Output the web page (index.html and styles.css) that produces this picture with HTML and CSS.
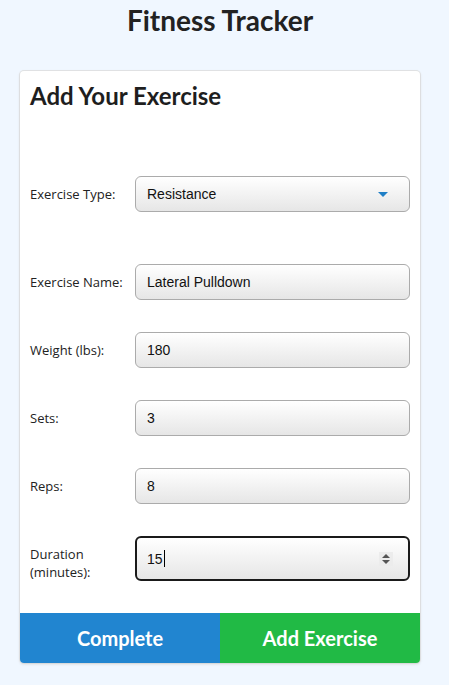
FILE: index.html
```html
<!DOCTYPE html>
<html lang="en">
<head>
<meta charset="utf-8">
<title>Fitness Tracker</title>
<link rel="stylesheet" href="styles.css">
</head>
<body>
<div class="page">
<h1 class="title">Fitness Tracker</h1>
<div class="card">
  <div class="card-body">
    <h2 class="card-title">Add Your Exercise</h2>
    <div class="row type-row">
      <label class="label">Exercise Type:</label>
      <div class="control select">
        <span>Resistance</span>
        <svg class="arrow" width="10" height="5" viewBox="0 0 10 5"><path d="M0 0H10L5 5Z" fill="#1f7fc6"/></svg>
      </div>
    </div>
    <div class="fields">
      <div class="row">
        <label class="label">Exercise Name:</label>
        <div class="control">Lateral Pulldown</div>
      </div>
      <div class="row">
        <label class="label">Weight (lbs):</label>
        <div class="control">180</div>
      </div>
      <div class="row">
        <label class="label">Sets:</label>
        <div class="control">3</div>
      </div>
      <div class="row">
        <label class="label">Reps:</label>
        <div class="control">8</div>
      </div>
      <div class="row">
        <label class="label label-two">Duration<br>(minutes):</label>
        <div class="control focused">
          <span class="value">15<span class="caret"></span></span>
          <span class="spinner">
            <svg width="8" height="10" viewBox="0 0 8 10"><path d="M4 0L8 4H0Z M0 6H8L4 10Z" fill="#555"/></svg>
          </span>
        </div>
      </div>
    </div>
  </div>
  <div class="actions">
    <button class="btn btn-blue">Complete</button>
    <button class="btn btn-green">Add Exercise</button>
  </div>
</div>
</div>
</body>
</html>
```

FILE: styles.css
```css
html, body {
  margin: 0;
  padding: 0;
}
body {
  background: #f0f7ff;
  font-family: "Lato", "Helvetica Neue", Arial, sans-serif;
  color: rgba(0, 0, 0, 0.87);
  min-height: 685px;
}
.page {
  width: 400px;
  margin-left: 20px;
}
.title {
  margin: 0;
  padding-top: 3px;
  height: 71px;
  box-sizing: border-box;
  text-align: center;
  font-size: 28px;
  line-height: 34px;
  font-weight: 700;
  color: #222;
}
.card {
  background: #fff;
  border-radius: 4px;
  box-shadow: 0 1px 3px 0 #d4d4d5, 0 0 0 1px #e2e4e6;
}
.card-body {
  padding: 10px 10px 32px 10px;
}
.card-title {
  margin: 0 0 66px 0;
  font-size: 24px;
  line-height: 29px;
  font-weight: 700;
  color: #1e1e1e;
}
.type-row {
  margin-bottom: 52px;
}
.fields {
  display: flex;
  flex-direction: column;
  gap: 32px;
}
.row {
  display: flex;
  align-items: center;
}
.label {
  width: 105px;
  flex: none;
  font-family: "Open Sans", "Noto Sans", sans-serif;
  font-size: 13px;
  line-height: 20px;
  color: #222;
}
.label-two {
  align-self: flex-start;
  line-height: 18px;
  margin-top: 9px;
}
.control {
  flex: 1;
  height: 36px;
  box-sizing: border-box;
  border: 1px solid #ababab;
  border-radius: 6px;
  background: linear-gradient(#ffffff, #e6e6e6);
  padding: 0 11px;
  display: flex;
  align-items: center;
  font-family: "Liberation Sans", Arial, sans-serif;
  font-size: 14px;
  color: #111;
}
.select {
  justify-content: space-between;
  padding-right: 21px;
}
.arrow {
  display: block;
}
.control.focused {
  height: 45px;
  border: 2px solid #1a1a1a;
  padding: 0 10px;
  justify-content: space-between;
}
.value {
  display: flex;
  align-items: center;
}
.caret {
  display: inline-block;
  width: 1px;
  height: 17px;
  background: #000;
  margin-left: 1px;
}
.spinner {
  width: 14px;
  height: 14px;
  background: #ececec;
  display: flex;
  align-items: center;
  justify-content: center;
  margin-right: 5px;
}
.spinner svg {
  display: block;
}
.actions {
  display: flex;
}
.btn {
  flex: 1;
  height: 50px;
  border: 0;
  margin: 0;
  font-family: "Lato", sans-serif;
  font-weight: 700;
  font-size: 20px;
  color: #fff;
  cursor: pointer;
}
.btn-blue {
  background: #2185d0;
  border-bottom-left-radius: 4px;
}
.btn-green {
  background: #21ba45;
  border-bottom-right-radius: 4px;
}
```
